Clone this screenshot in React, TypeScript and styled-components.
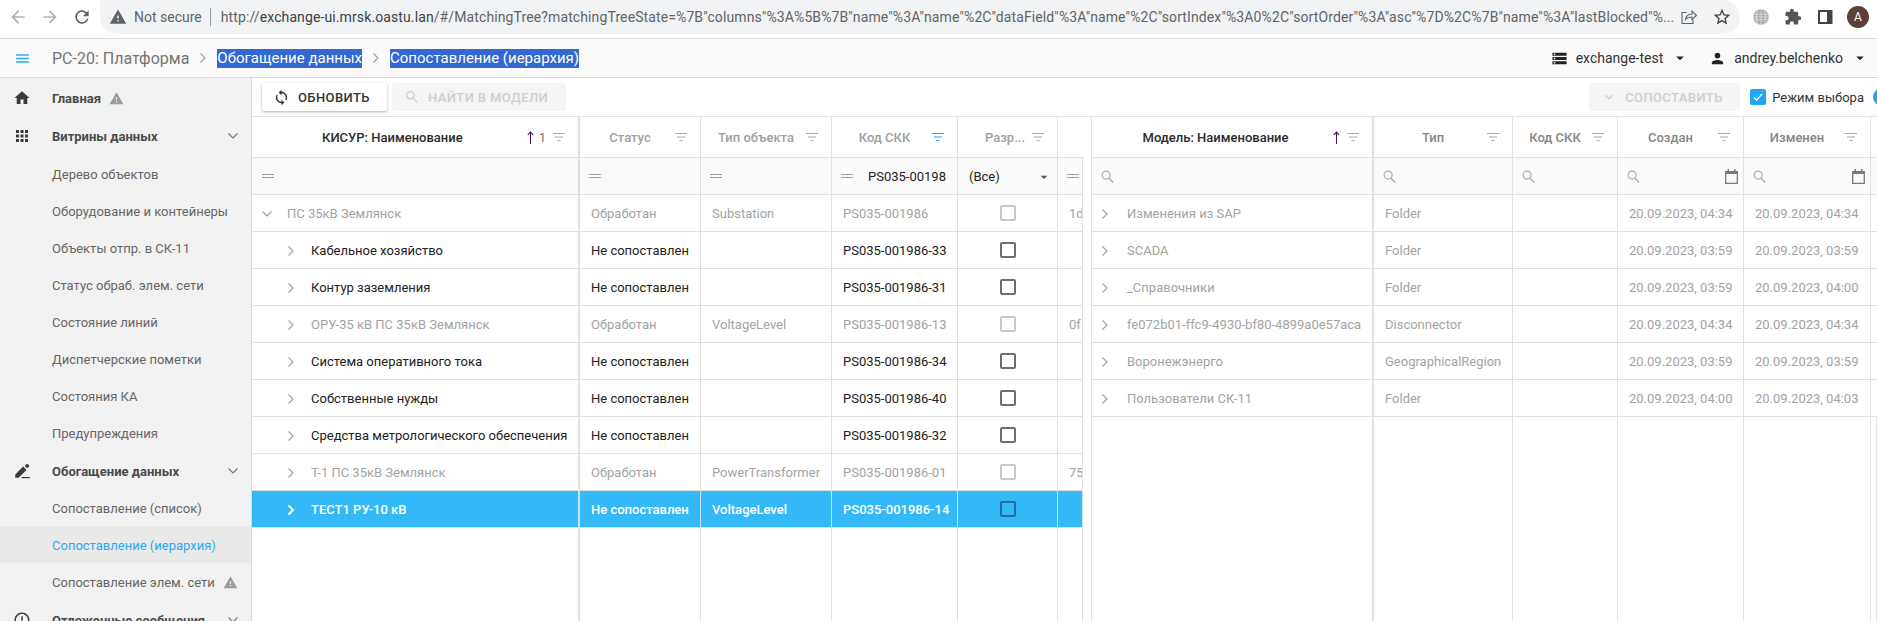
import React from "react";
import styled, { createGlobalStyle } from "styled-components";
import {
  MdApps,
  MdArrowBack,
  MdArrowDropDown,
  MdArrowForward,
  MdErrorOutline,
  MdExpandMore,
  MdExtension,
  MdHome,
  MdMenu,
  MdPerson,
  MdRefresh,
  MdSearch,
  MdStarBorder,
  MdStorage,
  MdSync,
  MdWarning,
} from "react-icons/md";

const GlobalStyle = createGlobalStyle`
  html, body { margin: 0; padding: 0; background: #fff; }
  body { font-family: Roboto, "Liberation Sans", sans-serif; font-size: 13px; color: #333; }
`;

const URL_REST =
  '/#/MatchingTree?matchingTreeState=%7B"columns"%3A%5B%7B"name"%3A"name"%2C"dataField"%3A"name"%2C"sortIndex"%3A0%2C"sortOrder"%3A"asc"%7D%2C%7B"name"%3A"lastBlocked"%...';

const LEFT_COLS = "326px 2px 121px 131px 126px 100px 25px";
const RIGHT_COLS = "282px 139px 105px 126px 127px 1fr";

const leftRows = [
  { name: "ПС 35кВ Землянск", level: 0, muted: true, status: "Обработан", type: "Substation", code: "PS035-001986", extra: "1d" },
  { name: "Кабельное хозяйство", level: 1, status: "Не сопоставлен", type: "", code: "PS035-001986-33" },
  { name: "Контур заземления", level: 1, status: "Не сопоставлен", type: "", code: "PS035-001986-31" },
  { name: "ОРУ-35 кВ ПС 35кВ Землянск", level: 1, muted: true, status: "Обработан", type: "VoltageLevel", code: "PS035-001986-13", extra: "0f" },
  { name: "Система оперативного тока", level: 1, status: "Не сопоставлен", type: "", code: "PS035-001986-34" },
  { name: "Собственные нужды", level: 1, status: "Не сопоставлен", type: "", code: "PS035-001986-40" },
  { name: "Средства метрологического обеспечения", level: 1, status: "Не сопоставлен", type: "", code: "PS035-001986-32" },
  { name: "Т-1 ПС 35кВ Землянск", level: 1, muted: true, status: "Обработан", type: "PowerTransformer", code: "PS035-001986-01", extra: "75" },
  { name: "ТЕСТ1 РУ-10 кВ", level: 1, selected: true, status: "Не сопоставлен", type: "VoltageLevel", code: "PS035-001986-14" },
];

const rightRows = [
  { name: "Изменения из SAP", type: "Folder", created: "20.09.2023, 04:34", changed: "20.09.2023, 04:34" },
  { name: "SCADA", type: "Folder", created: "20.09.2023, 03:59", changed: "20.09.2023, 03:59" },
  { name: "_Справочники", type: "Folder", created: "20.09.2023, 03:59", changed: "20.09.2023, 04:00" },
  { name: "fe072b01-ffc9-4930-bf80-4899a0e57aca", type: "Disconnector", created: "20.09.2023, 04:34", changed: "20.09.2023, 04:34" },
  { name: "Воронежэнерго", type: "GeographicalRegion", created: "20.09.2023, 03:59", changed: "20.09.2023, 03:59" },
  { name: "Пользователи СК-11", type: "Folder", created: "20.09.2023, 04:00", changed: "20.09.2023, 04:03" },
];

function ChevronRight(props: { bold?: boolean }) {
  return (
    <svg viewBox="0 0 8 12" width="8" height="12">
      <path d="M1.5 1.5L6 6l-4.5 4.5" stroke="currentColor" strokeWidth={props.bold ? 2 : 1.2} fill="none" />
    </svg>
  );
}

function ChevronDown() {
  return (
    <svg viewBox="0 0 12 8" width="12" height="8">
      <path d="M1.5 1.5L6 6l4.5-4.5" stroke="currentColor" strokeWidth="1.2" fill="none" />
    </svg>
  );
}

function FilterIcon(props: { active?: boolean }) {
  return (
    <FilterSvg viewBox="0 0 12 8" $active={props.active}>
      <path d="M0 .5h12M2 4h8M4.5 7.5h3" stroke="currentColor" strokeWidth="1" fill="none" />
    </FilterSvg>
  );
}

function EqualIcon() {
  return (
    <EqualSvg viewBox="0 0 12 5">
      <path d="M0 .5h12M0 3.5h12" stroke="currentColor" strokeWidth="1" fill="none" />
    </EqualSvg>
  );
}

function SearchIcon() {
  return (
    <SearchSvg viewBox="0 0 14 14">
      <circle cx="5.5" cy="5.5" r="4.3" stroke="currentColor" strokeWidth="1.3" fill="none" />
      <path d="M8.6 8.8l4.6 4.6" stroke="currentColor" strokeWidth="1.5" fill="none" />
    </SearchSvg>
  );
}

function SortArrow() {
  return (
    <ArrowSvg viewBox="0 0 7 13">
      <path d="M3.5 13V1M.8 3.8l2.7-2.8 2.7 2.8" stroke="currentColor" strokeWidth="1.1" fill="none" />
    </ArrowSvg>
  );
}

function CalendarIcon() {
  return (
    <CalendarSvg viewBox="0 0 13 15">
      <path d="M.7 2.7h11.6v11.6H.7z" stroke="currentColor" strokeWidth="1.3" fill="none" />
      <path d="M.7 2h11.6v3H.7zM2.5 0h1.5v2H2.5zM9 0h1.5v2H9z" fill="currentColor" />
    </CalendarSvg>
  );
}

function EditIcon() {
  return (
    <svg viewBox="0 0 24 24" width="18" height="18">
      <path d="M3 21v-4.5L13.5 6l4.5 4.5L7.5 21z" fill="#3a3a3a" />
      <circle cx="18.8" cy="5.2" r="2.6" fill="#3a3a3a" />
      <path d="M11.5 20h11v1.6h-11z" fill="#3a3a3a" />
    </svg>
  );
}

function ShareIcon() {
  return (
    <ChromeSvg viewBox="0 0 16 14">
      <path
        d="M5.5 2.5H1v11h11V10M4.5 9.5c.6-3.5 3-5.5 6.5-5.5V1l4.5 4.5L11 9.5V7C8.500 7 6 7.7 4.5 9.5z"
        stroke="#5f6368"
        strokeWidth="1.1"
        fill="none"
      />
    </ChromeSvg>
  );
}

function GlobeIcon() {
  return (
    <ChromeSvg viewBox="0 0 16 16">
      <circle cx="8" cy="8" r="7.8" fill="#ababab" />
      <path
        d="M0 5.3h16M0 8h16M0 10.7h16M8 0v16M5 .8c-2 4-2 10.4 0 14.400M11 .8c2 4 2 10.4 0 14.400"
        stroke="#e8e8e8"
        strokeWidth="0.7"
        fill="none"
      />
    </ChromeSvg>
  );
}

function SidePanelIcon() {
  return (
    <ChromeSvg viewBox="0 0 16 16">
      <path d="M2 2h12.5v12H2z" stroke="#444" strokeWidth="2" fill="none" />
      <path d="M10 2h4.5v12H10z" fill="#444" />
    </ChromeSvg>
  );
}

export default function App() {
  return (
    <Page>
      <GlobalStyle />
      <BrowserBar>
        <NavIcon $dim>
          <MdArrowBack />
        </NavIcon>
        <NavIcon $dim>
          <MdArrowForward />
        </NavIcon>
        <NavIcon>
          <MdRefresh />
        </NavIcon>
        <AddressPill>
          <SecureIcon>
            <MdWarning />
          </SecureIcon>
          <NotSecure>Not secure</NotSecure>
          <UrlText>
            http://<UrlHost>exchange-ui.mrsk.oastu.lan</UrlHost>
            {URL_REST}
          </UrlText>
          <ShareIcon />
          <StarWrap>
            <MdStarBorder />
          </StarWrap>
        </AddressPill>
        <ChromeTools>
          <GlobeIcon />
          <PuzzleWrap>
            <MdExtension />
          </PuzzleWrap>
          <SidePanelIcon />
          <Avatar>A</Avatar>
        </ChromeTools>
      </BrowserBar>

      <AppHeader>
        <MenuButton>
          <MdMenu />
        </MenuButton>
        <Crumb>РС-20: Платформа</Crumb>
        <CrumbChevron>
          <ChevronRight />
        </CrumbChevron>
        <SelectedCrumb>Обогащение данных</SelectedCrumb>
        <CrumbChevron>
          <ChevronRight />
        </CrumbChevron>
        <SelectedCrumb>Сопоставление (иерархия)</SelectedCrumb>
        <HeaderMenus>
          <HeaderMenu>
            <MdStorage size={17} />
            <span>exchange-test</span>
            <MdArrowDropDown size={18} />
          </HeaderMenu>
          <HeaderMenu>
            <MdPerson size={17} />
            <span>andrey.belchenko</span>
            <MdArrowDropDown size={18} />
          </HeaderMenu>
        </HeaderMenus>
      </AppHeader>

      <Body>
        <Sidebar>
          <NavGroup>
            <GroupIcon>
              <MdHome />
            </GroupIcon>
            Главная
            <NavWarning>
              <MdWarning />
            </NavWarning>
          </NavGroup>
          <NavGroup>
            <GroupIcon>
              <MdApps />
            </GroupIcon>
            Витрины данных
            <NavExpand>
              <ChevronDown />
            </NavExpand>
          </NavGroup>
          <NavItem>Дерево объектов</NavItem>
          <NavItem>Оборудование и контейнеры</NavItem>
          <NavItem>Объекты отпр. в СК-11</NavItem>
          <NavItem>Статус обраб. элем. сети</NavItem>
          <NavItem>Состояние линий</NavItem>
          <NavItem>Диспетчерские пометки</NavItem>
          <NavItem>Состояния КА</NavItem>
          <NavItem>Предупреждения</NavItem>
          <NavGroup $low>
            <GroupIcon>
              <EditIcon />
            </GroupIcon>
            Обогащение данных
            <NavExpand>
              <ChevronDown />
            </NavExpand>
          </NavGroup>
          <NavItem>Сопоставление (список)</NavItem>
          <NavItem $active>Сопоставление (иерархия)</NavItem>
          <NavItem>
            Сопоставление элем. сети
            <NavWarning>
              <MdWarning />
            </NavWarning>
          </NavItem>
          <NavGroup $low>
            <GroupIcon>
              <MdErrorOutline />
            </GroupIcon>
            Отложенные сообщения
            <NavExpand>
              <ChevronDown />
            </NavExpand>
          </NavGroup>
        </Sidebar>

        <Content>
          <Toolbar>
            <RefreshButton>
              <MdSync size={17} />
              ОБНОВИТЬ
            </RefreshButton>
            <DisabledButton>
              <MdSearch size={16} />
              НАЙТИ В МОДЕЛИ
            </DisabledButton>
            <ToolbarRight>
              <DisabledButton $wide>
                <MdExpandMore size={16} />
                СОПОСТАВИТЬ
              </DisabledButton>
              <ModeCheck>
                <svg viewBox="0 0 16 16" width="12" height="12">
                  <path d="M2.5 8.5l3.5 3.5 7.5-8" stroke="#fff" strokeWidth="1.8" fill="none" />
                </svg>
              </ModeCheck>
              <ModeLabel>Режим выбора</ModeLabel>
              <BlueDot />
            </ToolbarRight>
          </Toolbar>

          <Grids>
            <LeftGrid>
              <HeadRow $cols={LEFT_COLS}>
                <HeadCell $strong>
                  <HeadTitle>КИСУР: Наименование</HeadTitle>
                  <SortArrow />
                  <SortIndex>1</SortIndex>
                  <FilterIcon />
                </HeadCell>
                <Divider />
                <HeadCell>
                  <HeadTitle>Статус</HeadTitle>
                  <FilterIcon />
                </HeadCell>
                <HeadCell>
                  <HeadTitle>Тип объекта</HeadTitle>
                  <FilterIcon />
                </HeadCell>
                <HeadCell>
                  <HeadTitle>Код СКК</HeadTitle>
                  <FilterIcon active />
                </HeadCell>
                <HeadCell>
                  <HeadTitle $end>Разр...</HeadTitle>
                  <FilterIcon />
                </HeadCell>
                <HeadCell />
              </HeadRow>
              <FilterRow $cols={LEFT_COLS}>
                <FilterCell $first>
                  <EqualIcon />
                </FilterCell>
                <Divider />
                <FilterCell>
                  <EqualIcon />
                </FilterCell>
                <FilterCell>
                  <EqualIcon />
                </FilterCell>
                <FilterCell>
                  <EqualIcon />
                  <FilterValue>PS035-00198</FilterValue>
                </FilterCell>
                <FilterCell>
                  <SelectValue>(Все)</SelectValue>
                  <SelectCaret>
                    <MdArrowDropDown />
                  </SelectCaret>
                </FilterCell>
                <FilterCell>
                  <EqualIcon />
                </FilterCell>
              </FilterRow>
              {leftRows.map((row) => (
                <DataRow key={row.name} $cols={LEFT_COLS} $selected={row.selected} $muted={row.muted}>
                  <TreeCell $level={row.level}>
                    <TreeChevron $level={row.level}>
                      {row.level === 0 ? <ChevronDown /> : <ChevronRight bold={row.selected} />}
                    </TreeChevron>
                    {row.name}
                  </TreeCell>
                  <Divider />
                  <Cell>{row.status}</Cell>
                  <Cell>{row.type}</Cell>
                  <Cell>{row.code}</Cell>
                  <CheckCell>
                    <RowCheck />
                  </CheckCell>
                  <Cell>{row.extra}</Cell>
                </DataRow>
              ))}
              <Filler $cols={LEFT_COLS}>
                <FillerCell $first />
                <Divider />
                <FillerCell />
                <FillerCell />
                <FillerCell />
                <FillerCell />
                <FillerCell />
              </Filler>
            </LeftGrid>

            <RightGrid>
              <HeadRow $cols={RIGHT_COLS}>
                <HeadCell $strong $thick>
                  <HeadTitle>Модель: Наименование</HeadTitle>
                  <SortArrow />
                  <FilterIcon />
                </HeadCell>
                <HeadCell $dark>
                  <HeadTitle>Тип</HeadTitle>
                  <FilterIcon />
                </HeadCell>
                <HeadCell $dark>
                  <HeadTitle>Код СКК</HeadTitle>
                  <FilterIcon />
                </HeadCell>
                <HeadCell $dark>
                  <HeadTitle>Создан</HeadTitle>
                  <FilterIcon />
                </HeadCell>
                <HeadCell $dark>
                  <HeadTitle>Изменен</HeadTitle>
                  <FilterIcon />
                </HeadCell>
                <HeadCell />
              </HeadRow>
              <FilterRow $cols={RIGHT_COLS}>
                <FilterCell $thick>
                  <SearchIcon />
                </FilterCell>
                <FilterCell>
                  <SearchIcon />
                </FilterCell>
                <FilterCell>
                  <SearchIcon />
                </FilterCell>
                <FilterCell>
                  <SearchIcon />
                  <CalendarIcon />
                </FilterCell>
                <FilterCell>
                  <SearchIcon />
                  <CalendarIcon />
                </FilterCell>
                <FilterCell />
              </FilterRow>
              {rightRows.map((row) => (
                <DataRow key={row.name} $cols={RIGHT_COLS} $muted>
                  <ModelCell>
                    <ModelChevron>
                      <ChevronRight />
                    </ModelChevron>
                    {row.name}
                  </ModelCell>
                  <Cell>{row.type}</Cell>
                  <Cell />
                  <Cell>{row.created}</Cell>
                  <Cell>{row.changed}</Cell>
                  <Cell />
                </DataRow>
              ))}
              <Filler $cols={RIGHT_COLS}>
                <FillerCell $thick />
                <FillerCell />
                <FillerCell />
                <FillerCell />
                <FillerCell />
                <FillerCell />
              </Filler>
            </RightGrid>
          </Grids>
        </Content>
      </Body>
    </Page>
  );
}

const Page = styled.div`
  width: 1877px;
  height: 621px;
  overflow: hidden;
  display: flex;
  flex-direction: column;
`;

const BrowserBar = styled.div`
  height: 38px;
  flex: none;
  display: flex;
  align-items: flex-start;
  background: #fff;
  border-bottom: 1px solid #dcdcdc;
  padding-left: 2px;
`;

const NavIcon = styled.div<{ $dim?: boolean }>`
  width: 32px;
  height: 34px;
  display: flex;
  align-items: center;
  justify-content: center;
  font-size: 20px;
  color: ${(p) => (p.$dim ? "#b0b2b5" : "#5f6368")};
`;

const AddressPill = styled.div`
  width: 1640px;
  height: 34px;
  margin-left: 2px;
  flex: none;
  display: flex;
  align-items: center;
  background: #f1f3f4;
  border-radius: 0 17px 17px 17px;
  padding: 0 0 0 9px;
  box-sizing: border-box;
  font-size: 14px;
`;

const SecureIcon = styled.div`
  font-size: 18px;
  color: #5f6368;
  display: flex;
  margin-right: 7px;
`;

const NotSecure = styled.span`
  color: #5f6368;
  padding-right: 8px;
  border-right: 1px solid #9aa0a6;
  line-height: 18px;
  margin-right: 10px;
  white-space: nowrap;
`;

const UrlText = styled.span`
  flex: 1;
  color: #5f6368;
  white-space: nowrap;
  overflow: hidden;
  letter-spacing: 0.11px;
`;

const UrlHost = styled.span`
  color: #3c4043;
`;

const ChromeSvg = styled.svg`
  width: 16px;
  height: 16px;
  flex: none;
`;

const StarWrap = styled.div`
  font-size: 20px;
  color: #444;
  display: flex;
  margin: 0 8px 0 15px;
`;

const ChromeTools = styled.div`
  display: flex;
  align-items: center;
  height: 34px;
  margin-left: 13px;
  gap: 15px;
`;

const PuzzleWrap = styled.div`
  font-size: 18px;
  color: #555;
  display: flex;
`;

const Avatar = styled.div`
  width: 22px;
  height: 22px;
  margin-left: -1px;
  border-radius: 50%;
  background: #5d4037;
  color: #fff;
  font-size: 12px;
  display: flex;
  align-items: center;
  justify-content: center;
`;

const AppHeader = styled.div`
  height: 38px;
  flex: none;
  display: flex;
  align-items: center;
  background: #fafafa;
  border-bottom: 1px solid #dcdcdc;
`;

const MenuButton = styled.div`
  width: 52px;
  padding-left: 14px;
  box-sizing: border-box;
  font-size: 17px;
  color: #2da8f3;
  display: flex;
`;

const Crumb = styled.span`
  color: #757575;
  font-size: 16px;
`;

const CrumbChevron = styled.div`
  width: 28px;
  display: flex;
  justify-content: center;
  color: #a0a0a0;
`;

const SelectedCrumb = styled.span`
  background: #3367d1;
  color: #fff;
  font-size: 15px;
  line-height: 19px;
`;

const HeaderMenus = styled.div`
  margin-left: auto;
  display: flex;
  padding-right: 8px;
  gap: 20px;
`;

const HeaderMenu = styled.div`
  display: flex;
  align-items: center;
  gap: 8px;
  color: #333;
  font-size: 14px;
  svg {
    color: #222;
  }
`;

const Body = styled.div`
  flex: 1;
  display: flex;
  min-height: 0;
`;

const Sidebar = styled.div`
  width: 252px;
  flex: none;
  box-sizing: border-box;
  padding-top: 1px;
  background: #f2f2f2;
  border-right: 1px solid #dcdcdc;
  overflow: hidden;
`;

const NavGroup = styled.div<{ $low?: boolean }>`
  height: 38px;
  box-sizing: border-box;
  padding-top: ${(p) => (p.$low ? "2px" : "0")};
  display: flex;
  align-items: center;
  font-size: 13px;
  font-weight: 700;
  color: #4a4a4a;
`;

const GroupIcon = styled.div`
  width: 52px;
  padding-left: 13px;
  box-sizing: border-box;
  font-size: 18px;
  color: #3a3a3a;
  display: flex;
  flex: none;
`;

const NavExpand = styled.div`
  margin-left: auto;
  margin-right: 12px;
  color: #777;
  display: flex;
`;

const NavWarning = styled.div`
  font-size: 15px;
  color: #9b9b9b;
  display: flex;
  margin-left: 8px;
`;

const NavItem = styled.div<{ $active?: boolean }>`
  height: 37px;
  box-sizing: border-box;
  display: flex;
  align-items: center;
  padding: 2px 0 0 52px;
  font-size: 13px;
  color: ${(p) => (p.$active ? "#2da8f3" : "#666")};
  background: ${(p) => (p.$active ? "#e9e9e9" : "transparent")};
`;

const Content = styled.div`
  flex: 1;
  min-width: 0;
  display: flex;
  flex-direction: column;
`;

const Toolbar = styled.div`
  height: 39px;
  flex: none;
  box-sizing: border-box;
  border-bottom: 1px solid #e4e4e4;
  padding: 5px 0 4px 10px;
  display: flex;
  align-items: flex-start;
  gap: 5px;
`;

const RefreshButton = styled.div`
  width: 125px;
  height: 28px;
  padding-left: 11px;
  box-sizing: border-box;
  display: flex;
  align-items: center;
  gap: 8px;
  background: #fff;
  border-radius: 2px;
  box-shadow: 0 1px 3px rgba(0, 0, 0, 0.3);
  font-size: 13px;
  font-weight: 500;
  letter-spacing: 0.4px;
  color: #333;
`;

const DisabledButton = styled.div<{ $wide?: boolean }>`
  width: ${(p) => (p.$wide ? "151px" : "174px")};
  height: 28px;
  padding-left: 12px;
  box-sizing: border-box;
  display: flex;
  align-items: center;
  gap: 8px;
  background: #f5f5f5;
  border-radius: 2px;
  font-size: 13px;
  font-weight: 500;
  letter-spacing: 0.4px;
  color: #cfcfcf;
`;

const ToolbarRight = styled.div`
  margin-left: auto;
  margin-right: -14px;
  display: flex;
  align-items: center;
  height: 28px;
`;

const ModeCheck = styled.div`
  width: 16px;
  height: 16px;
  margin-left: 10px;
  border-radius: 2px;
  background: #1ea7f5;
  display: flex;
  align-items: center;
  justify-content: center;
`;

const ModeLabel = styled.span`
  margin-left: 6px;
  font-size: 13px;
  color: #333;
  white-space: nowrap;
`;

const BlueDot = styled.div`
  width: 18px;
  height: 18px;
  margin-left: 9px;
  border-radius: 50%;
  background: #1ea7f5;
`;

const Grids = styled.div`
  flex: 1;
  min-height: 0;
  display: flex;
`;

const LeftGrid = styled.div`
  width: 831px;
  flex: none;
  display: flex;
  flex-direction: column;
  overflow: hidden;
`;

const RightGrid = styled.div`
  margin-left: 8px;
  flex: 1;
  min-width: 0;
  display: flex;
  flex-direction: column;
  border-left: 1px solid #e0e0e0;
  overflow: hidden;
`;

const GridRow = styled.div<{ $cols: string }>`
  display: grid;
  grid-template-columns: ${(p) => p.$cols};
  flex: none;
  box-sizing: border-box;
  height: 37px;
  border-bottom: 1px solid #e0e0e0;
`;

const HeadRow = styled(GridRow)`
  height: 41px;
`;

const FilterRow = styled(GridRow)`
  background: #fafafa;
`;

const DataRow = styled(GridRow)<{ $selected?: boolean; $muted?: boolean }>`
  background: ${(p) => (p.$selected ? "#34b9f8" : "#fff")};
  color: ${(p) => (p.$selected ? "#fff" : p.$muted ? "#a3a3a3" : "#222")};
  font-weight: ${(p) => (p.$selected ? 500 : 400)};
  --check: ${(p) => (p.$selected ? "#1f6f9c" : p.$muted ? "#c9c9c9" : "#6e6e6e")};
  --line: ${(p) => (p.$selected ? "#bfe8fd" : "#e0e0e0")};
  --chevron: ${(p) => (p.$selected ? "#fff" : "#a3a3a3")};
`;

const Filler = styled(GridRow)`
  flex: 1;
  height: auto;
  border-bottom: none;
`;

const Divider = styled.div`
  background: var(--line, #dedede);
`;

const HeadCell = styled.div<{ $strong?: boolean; $thick?: boolean; $dark?: boolean }>`
  display: flex;
  align-items: center;
  min-width: 0;
  padding: 0 13px 0 12px;
  box-sizing: border-box;
  border-right: ${(p) => (p.$thick ? "2px" : "1px")} solid #e0e0e0;
  color: ${(p) => (p.$strong ? "#2b2b2b" : p.$dark ? "#858585" : "#a0a0a0")};
  font-size: 13px;
  font-weight: 500;
  &:first-child {
    border-right-width: ${(p) => (p.$thick ? "2px" : "0")};
  }
`;

const HeadTitle = styled.span<{ $end?: boolean }>`
  flex: 1;
  text-align: ${(p) => (p.$end ? "right" : "center")};
  white-space: nowrap;
`;

const SortIndex = styled.span`
  margin: 0 0 0 5px;
  color: #777;
  font-weight: 400;
`;

const FilterSvg = styled.svg<{ $active?: boolean }>`
  width: 12px;
  height: 8px;
  flex: none;
  margin-left: 7px;
  color: ${(p) => (p.$active ? "#1ea7f5" : "#a8a8a8")};
`;

const EqualSvg = styled.svg`
  width: 12px;
  height: 5px;
  flex: none;
  color: #a0a0a0;
`;

const SearchSvg = styled.svg`
  width: 13px;
  height: 13px;
  flex: none;
  color: #ababab;
`;

const ArrowSvg = styled.svg`
  width: 7px;
  height: 13px;
  flex: none;
  margin-left: 6px;
  color: #4a1a5a;
`;

const CalendarSvg = styled.svg`
  width: 13px;
  height: 15px;
  flex: none;
  margin-left: auto;
  color: #7a7a7a;
`;

const FilterCell = styled.div<{ $thick?: boolean; $first?: boolean }>`
  display: flex;
  align-items: center;
  min-width: 0;
  padding: 1px 5px 0 ${(p) => (p.$first ? "10px" : "9px")};
  box-sizing: border-box;
  border-right: ${(p) => (p.$thick ? "2px" : p.$first ? "0" : "1px")} solid #e0e0e0;
  overflow: hidden;
`;

const FilterValue = styled.span`
  margin-left: 15px;
  color: #222;
  white-space: nowrap;
`;

const SelectValue = styled.span`
  flex: 1;
  margin-left: 2px;
  color: #222;
`;

const SelectCaret = styled.div`
  font-size: 16px;
  color: #555;
  display: flex;
`;

const Cell = styled.div`
  display: flex;
  align-items: center;
  padding: 1px 0 0 11px;
  box-sizing: border-box;
  min-width: 0;
  white-space: nowrap;
  overflow: hidden;
  border-right: 1px solid var(--line);
`;

const CheckCell = styled(Cell)`
  padding: 0;
  justify-content: center;
`;

const RowCheck = styled.div`
  width: 16px;
  height: 16px;
  box-sizing: border-box;
  border: 2px solid var(--check);
  border-radius: 2px;
`;

const TreeCell = styled.div<{ $level: number }>`
  display: flex;
  align-items: center;
  padding: 1px 0 0 ${(p) => (p.$level === 0 ? "9px" : "35px")};
  box-sizing: border-box;
  white-space: nowrap;
  overflow: hidden;
`;

const TreeChevron = styled.div<{ $level: number }>`
  width: ${(p) => (p.$level === 0 ? "26px" : "24px")};
  color: var(--chevron);
  display: flex;
  flex: none;
`;

const ModelCell = styled(Cell)`
  padding-left: 9px;
  border-right: 2px solid #e0e0e0;
`;

const ModelChevron = styled.div`
  width: 26px;
  color: #a3a3a3;
  display: flex;
  flex: none;
`;

const FillerCell = styled.div<{ $thick?: boolean; $first?: boolean }>`
  border-right: ${(p) => (p.$thick ? "2px" : p.$first ? "0" : "1px")} solid #e0e0e0;
  box-sizing: border-box;
`;
